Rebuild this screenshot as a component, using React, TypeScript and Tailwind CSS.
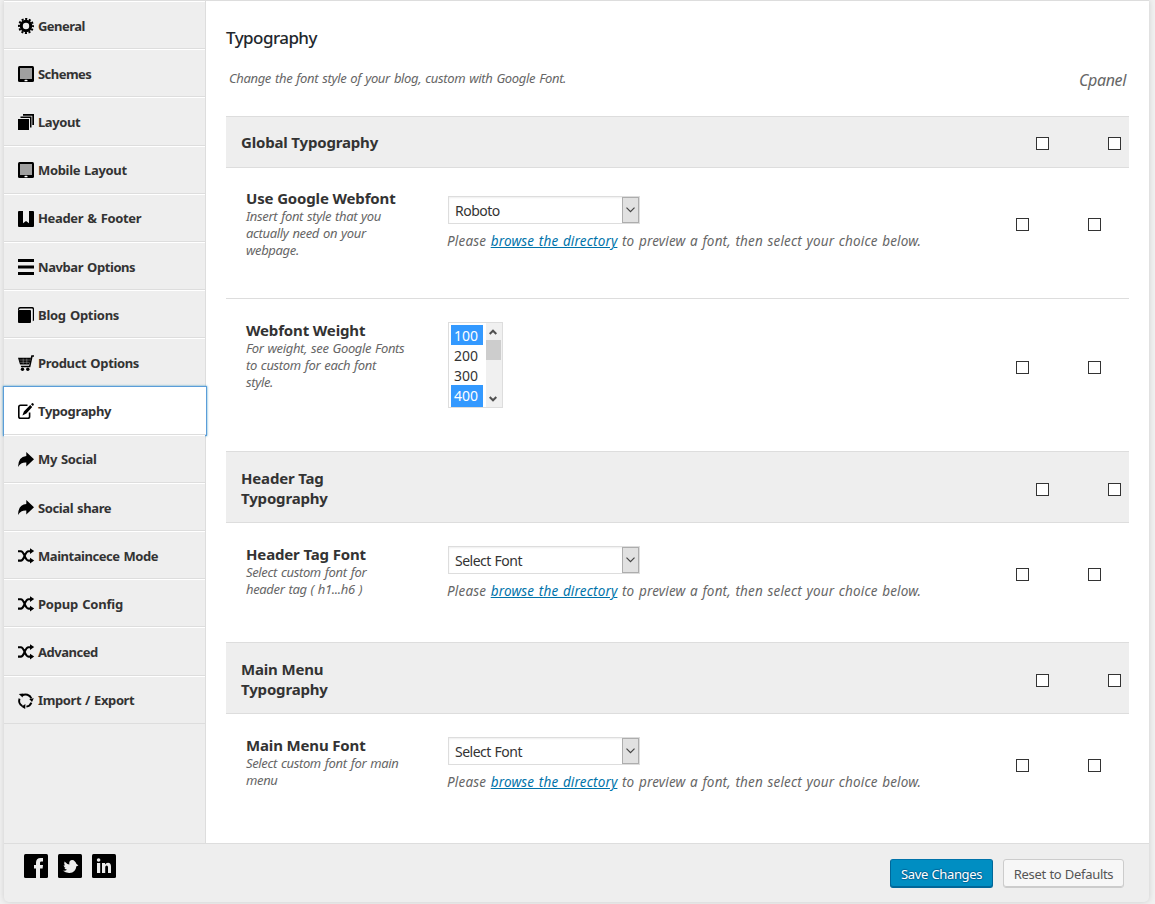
import React from 'react';

const icons: Record<string, React.ReactNode> = {
  gear: (
    <>
      <circle cx="8" cy="8" r="4.7" fill="none" stroke="#000" strokeWidth="3" />
      <circle cx="8" cy="8" r="7" fill="none" stroke="#000" strokeWidth="2" strokeDasharray="2.1 1.565" strokeDashoffset="1.05" />
    </>
  ),
  tablet: (
    <>
      <rect width="16" height="16" rx="1.5" />
      <rect x="2" y="2" width="12" height="11" fill="#a0a0a0" />
      <rect x="6.5" y="13.8" width="3" height="1.4" rx=".5" fill="#fff" />
    </>
  ),
  stack: (
    <>
      <rect y="5" width="11" height="11" />
      <path d="M2.5 2.5H13.5V13.5H12V4H2.5Z" />
      <path d="M5 0H16V11H14.3V1.8H5Z" />
    </>
  ),
  bookmark: <path fillRule="evenodd" d="M1 0H5V12.3L8 10L11 12.3V0H15Q16 0 16 1V15Q16 16 15 16H1Q0 16 0 15V1Q0 0 1 0Z" />,
  bars: (
    <>
      <rect width="16" height="3" />
      <rect y="6.5" width="16" height="3" />
      <rect y="13" width="16" height="3" />
    </>
  ),
  book: (
    <>
      <rect y="3" width="13" height="13" rx="1" />
      <path d="M0 4V2Q0 0 2 0H14.5Q16 0 16 1.5V13Q16 14 14.8 14.2V2.2Q14.8 1.4 14 1.4H2.6Q1.4 1.4 .9 2.8Z" />
    </>
  ),
  cart: (
    <>
      <path d="M16 .2V1.8H14.6L12.3 12.2H3.2L2.7 10.7H11.1L13.3 .2Z" />
      <path d="M0 2.8H13L11.2 9.4H2Z" />
      <path d="M1.5 5H12M2.2 7.3H11M5.2 3.6V8.8M8.8 3.6V8.8" stroke="#aaa" strokeWidth=".5" />
      <circle cx="4.5" cy="14.2" r="1.7" />
      <circle cx="9.8" cy="14.2" r="1.7" />
    </>
  ),
  edit: (
    <>
      <path d="M9.5 2.3H2.5Q.8 2.3 .8 4V13.4Q.8 15.2 2.5 15.2H9.8Q11.6 15.2 11.6 13.4V9.5" fill="none" stroke="#000" strokeWidth="1.6" />
      <path d="M12.2 2.1L14.2 3.9L8.4 10.4L4.4 12.4L5.9 8.4ZM13 1.2L14 0.2Q14.6-.2 15.3.5Q16.3 1.4 15.7 2L14.8 3Z" />
    </>
  ),
  share: <path d="M8.3 0L16 7.3L8.3 14.6V10.6Q3 10.2 0 15Q.2 4.6 8.3 4Z" />,
  shuffle: (
    <>
      <path d="M0 3.2H2.8C6.6 3.2 6.6 12.6 10.6 12.6H13M0 12.6H2.8C6.6 12.6 6.6 3.2 10.6 3.2H13" fill="none" stroke="#000" strokeWidth="2.1" />
      <path d="M12 .2L16.2 3.1L12 6ZM12 9.7L16.2 12.6L12 15.6Z" />
    </>
  ),
  cycle: (
    <>
      <path d="M4 2.6A6.3 6.3 0 0 1 13.4 5.4M13.4 9.6A6.3 6.3 0 0 1 8.4 13.6M4.4 13A6.3 6.3 0 0 1 1.5 5.6" fill="none" stroke="#000" strokeWidth="1.9" />
      <path d="M.8 1L5.2 .5L4.6 4.4ZM11.2 6L15.8 5.2L14 9ZM7.4 11L3.4 13.8L7.2 16Z" />
    </>
  ),
};

type Item = { label: string; icon: string; cls: string };

const items: Item[] = [
  { label: 'General', icon: 'gear', cls: 'tracking-[-0.55px]' },
  { label: 'Schemes', icon: 'tablet', cls: 'tracking-[-0.55px]' },
  { label: 'Layout', icon: 'stack', cls: 'tracking-[-0.4px]' },
  { label: 'Mobile Layout', icon: 'tablet', cls: 'tracking-[-0.34px] [word-spacing:1px]' },
  { label: 'Header & Footer', icon: 'bookmark', cls: 'tracking-[-0.35px] [word-spacing:1px]' },
  { label: 'Navbar Options', icon: 'bars', cls: 'tracking-[-0.42px] [word-spacing:1px]' },
  { label: 'Blog Options', icon: 'book', cls: 'tracking-[-0.27px] [word-spacing:1px]' },
  { label: 'Product Options', icon: 'cart', cls: 'tracking-[-0.35px] [word-spacing:1px]' },
  { label: 'Typography', icon: 'edit', cls: 'tracking-[-0.35px]' },
  { label: 'My Social', icon: 'share', cls: 'tracking-[-0.35px] [word-spacing:1px]' },
  { label: 'Social share', icon: 'share', cls: 'tracking-[-0.4px] [word-spacing:1px]' },
  { label: 'Maintaincece Mode', icon: 'shuffle', cls: 'tracking-[-0.46px] [word-spacing:1px]' },
  { label: 'Popup Config', icon: 'shuffle', cls: 'tracking-[-0.22px] [word-spacing:1px]' },
  { label: 'Advanced', icon: 'shuffle', cls: 'tracking-[-0.47px]' },
  { label: 'Import / Export', icon: 'cycle', cls: 'tracking-[-0.4px] [word-spacing:1px]' },
];

function NavItem({ item, active }: { item: Item; active: boolean }) {
  return (
    <a
      className={
        active
          ? 'flex h-[48.2px] w-[202px] items-center border-b border-t border-b-[#ddd] border-t-white bg-white pl-[14px] pt-px shadow-[0_0_0_1px_#5b9dd9,0_0_2px_1px_rgba(30,140,190,0.8)]'
          : 'flex h-[48.2px] w-[201px] items-center border-b border-t border-b-[#ddd] border-t-white bg-[#eee] pl-[14px] pt-px'
      }
    >
      <svg width="16" height="16" viewBox="0 0 16 16" className="mt-[0.6px] shrink-0 overflow-visible">
        {icons[item.icon]}
      </svg>
      <span className={`ml-1 whitespace-nowrap pt-[1.6px] text-[13px] font-bold text-[#333] ${item.cls}`}>{item.label}</span>
    </a>
  );
}

function Checks({ inset }: { inset?: boolean }) {
  return (
    <div className={inset ? 'ml-auto flex gap-[59px] self-center pr-7' : 'ml-auto flex gap-[59px] self-center pr-2'}>
      <span className="size-[13px] border border-[#333] bg-white" />
      <span className="size-[13px] border border-[#333] bg-white" />
    </div>
  );
}

function SectionHead({ lines, tall }: { lines: string[]; tall?: boolean }) {
  return (
    <div className={`flex items-center border-y border-[#ddd] bg-[#eee] pl-[15px] ${tall ? 'h-[72px]' : 'h-[52px]'}`}>
      <h3 className={`text-[15px] font-bold leading-5 tracking-[-0.17px] text-[#333] ${tall ? 'pt-[2px]' : ''}`}>
        {lines.map((l) => (
          <span key={l} className="block">{l}</span>
        ))}
      </h3>
      <div className={tall ? 'ml-auto flex pt-[5px]' : 'ml-auto flex pt-[3px]'}>
        <Checks />
      </div>
    </div>
  );
}

function Field({ title, lines, cls, labelCls, children }: { title: string; lines: string[]; cls: string; labelCls: string; children: React.ReactNode }) {
  return (
    <div className={`flex pl-5 ${cls}`}>
      <div className={`w-[202px] shrink-0 ${labelCls}`}>
        <h4 className="-mb-px text-[15px] font-bold leading-[22px] tracking-[-0.15px] text-[#333]">{title}</h4>
        {lines.map((l) => (
          <p key={l} className="whitespace-nowrap text-[13px] italic leading-[17px] tracking-[-0.35px] text-[#666] [word-spacing:0.9px]">{l}</p>
        ))}
      </div>
      {children}
    </div>
  );
}

function FontSelect({ value, cls }: { value: string; cls: string }) {
  return (
    <div className={cls}>
      <div className="flex h-7 w-[192px] items-stretch border border-[#ddd] bg-white shadow-[inset_0_1px_2px_rgba(0,0,0,0.07)]">
        <span className="flex-1 pl-1.5 text-[14px] leading-[27px] tracking-[-0.5px] text-[#333] [word-spacing:0.5px]">{value}</span>
        <span className="flex w-[17px] items-center justify-center border border-[#adadad] bg-[#e1e1e1]">
          <svg width="9" height="6" viewBox="0 0 9 6" fill="none" stroke="#444" strokeWidth="1.2">
            <path d="M.5 .7L4.5 4.7L8.5 .7" />
          </svg>
        </span>
      </div>
      <p className="-ml-px mt-[7px] whitespace-nowrap text-[13.5px] italic leading-5 tracking-[0.17px] text-[#666] [word-spacing:0.85px]">
        Please <a className="text-[#0073aa] underline">browse the directory</a> to preview a font, then select your choice below.
      </p>
    </div>
  );
}

function WeightList() {
  return (
    <div className="mt-[23px] flex h-[86px] w-[55px] border border-[#ddd] bg-white">
      <div className="ml-0.5 mt-0.5 h-[82px] w-8 overflow-hidden text-[14px] leading-5">
        <div className="h-5 bg-[#39f] pl-[3px] pt-px text-white">100</div>
        <div className="h-5 pl-[3px] pt-px text-[#333]">200</div>
        <div className="h-5 pl-[3px] pt-px text-[#333]">300</div>
        <div className="h-[22px] bg-[#39f] pl-[3px] pt-px text-white">400</div>
      </div>
      <div className="ml-auto flex w-4 flex-col items-start bg-[#f0f0f0]">
        <svg width="8" height="6" viewBox="0 0 8 6" fill="none" stroke="#505050" strokeWidth="2" className="ml-[3.4px] mt-1.5">
          <path d="M.7 5L4 1.7L7.3 5" />
        </svg>
        <div className="mt-[5px] h-5 w-[15px] bg-[#cdcdcd]" />
        <svg width="8" height="6" viewBox="0 0 8 6" fill="none" stroke="#505050" strokeWidth="2" className="mb-[5px] ml-[3.4px] mt-auto">
          <path d="M.7 1L4 4.3L7.3 1" />
        </svg>
      </div>
    </div>
  );
}

export default function App() {
  return (
    <div className="h-[904px] w-[1155px] overflow-hidden bg-[#f1f1f1] pl-1 font-['Noto_Sans','Open_Sans',sans-serif]">
      <div className="flex h-[902px] w-[1145px] flex-col rounded-b-[5px] border-t border-[#ddd] bg-[#eee] shadow-[0_0_6px_rgba(0,0,0,0.15)]">
        <div className="flex h-[842px]">
          <nav className="z-10 w-[202px] shrink-0 border-r border-[#ddd]">
            {items.map((it) => (
              <NavItem key={it.label} item={it} active={it.label === 'Typography'} />
            ))}
          </nav>
          <main className="flex-1 bg-white pl-5 pr-5">
            <h2 className="pt-[26px] text-[17px] font-medium leading-[22px] tracking-[-0.55px] text-[#23282d]">Typography</h2>
            <div className="flex h-[67px] justify-between pl-[3px] pr-[3px] italic text-[#666]">
              <p className="pt-[19px] text-[13px] leading-5 tracking-[-0.35px] [word-spacing:1px]">Change the font style of your blog, custom with Google Font.</p>
              <p className="pt-[21px] text-[16px] leading-5 tracking-[-0.35px]">Cpanel</p>
            </div>
            <SectionHead lines={['Global Typography']} />
            <Field title="Use Google Webfont" lines={['Insert font style that you', 'actually need on your', 'webpage.']} cls="h-[131px] border-b border-[#ddd]" labelCls="pt-[19px]">
              <FontSelect value="Roboto" cls="mt-7" />
              <div className="ml-auto pt-[50px]"><Checks inset /></div>
            </Field>
            <Field title="Webfont Weight" lines={['For weight, see Google Fonts', 'to custom for each font', 'style.']} cls="h-[152px]" labelCls="pt-5">
              <WeightList />
              <div className="ml-auto pt-[62px]"><Checks inset /></div>
            </Field>
            <SectionHead lines={['Header Tag', 'Typography']} tall />
            <Field title="Header Tag Font" lines={['Select custom font for', 'header tag ( h1...h6 )']} cls="h-[119px]" labelCls="pt-5">
              <FontSelect value="Select Font" cls="mt-[23px]" />
              <div className="ml-auto pt-[45px]"><Checks inset /></div>
            </Field>
            <SectionHead lines={['Main Menu', 'Typography']} tall />
            <Field title="Main Menu Font" lines={['Select custom font for main', 'menu']} cls="h-[129px]" labelCls="pt-5">
              <FontSelect value="Select Font" cls="mt-[23px]" />
              <div className="ml-auto pt-[45px]"><Checks inset /></div>
            </Field>
          </main>
        </div>
        <footer className="flex flex-1 items-start border-t border-[#ddd] pl-5 pr-[25px] pt-[10px]">
          <div className="flex gap-[10px]">
            <svg width="24" height="24" viewBox="0 0 24 24">
              <rect width="24" height="24" rx="1.5" />
              <path fill="#eee" d="M12 24V14.5H10V11H12V8.8Q12 4 16.6 4H19V7.4H17.4Q16 7.4 16 8.8V11H19L18.6 14.5H16V24Z" />
            </svg>
            <svg width="24" height="24" viewBox="0 0 24 24">
              <rect width="24" height="24" rx="1.5" />
              <path
                fill="#eee"
                d="M6.6 7.6Q9 10.4 11.4 10.6Q10.6 6.6 13.8 6Q15.6 5.8 16.9 7.4Q18 8.2 18.3 9.8L20.4 11.6L18.4 12.3Q17.6 18.6 11.6 19Q7.6 19.2 4.6 16.6Q7.4 17.2 9 15.8Q6.8 15.4 6.2 13.8H7.6Q5.8 12.8 5.6 11.2L6.9 11.5Q5.6 9.6 6.6 7.6Z"
              />
            </svg>
            <svg width="24" height="24" viewBox="0 0 24 24">
              <rect width="24" height="24" rx="1.5" />
              <path fill="#eee" d="M5 9H8.2V19H5ZM10 9H13V10.4Q14 8.8 16 8.8Q19 8.8 19 12.6V19H16V13.2Q16 11.4 14.7 11.4Q13.2 11.4 13.2 13.4V19H10Z" />
              <circle cx="6.6" cy="6" r="1.8" fill="#eee" />
            </svg>
          </div>
          <div className="ml-auto mt-[5px] flex gap-[10px] text-[13px]">
            <button className="h-[29px] w-[103px] whitespace-nowrap rounded-[3px] border border-[#006799] border-t-[#0073aa] bg-[#008ec2] leading-[28px] tracking-[-0.35px] text-white shadow-[inset_0_-1px_0_#006799] [text-shadow:0_-1px_1px_#006799,1px_0_1px_#006799,0_1px_1px_#006799,-1px_0_1px_#006799] [word-spacing:0.5px]">
              Save Changes
            </button>
            <button className="h-[29px] w-[121px] whitespace-nowrap rounded-[3px] border border-[#ccc] bg-[#f7f7f7] leading-[28px] tracking-[-0.32px] text-[#555] shadow-[inset_0_-1px_0_#ccc] [word-spacing:0.5px]">
              Reset to Defaults
            </button>
          </div>
        </footer>
      </div>
    </div>
  );
}
